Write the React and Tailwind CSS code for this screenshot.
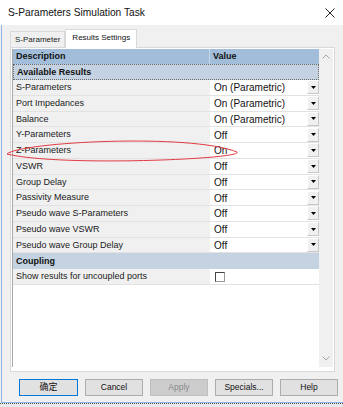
import React from 'react';

const results = [
    ['S-Parameters', 'On (Parametric)'],
    ['Port Impedances', 'On (Parametric)'],
    ['Balance', 'On (Parametric)'],
    ['Y-Parameters', 'Off'],
    ['Z-Parameters', 'On'],
    ['VSWR', 'Off'],
    ['Group Delay', 'Off'],
    ['Passivity Measure', 'Off'],
    ['Pseudo wave S-Parameters', 'Off'],
    ['Pseudo wave VSWR', 'Off'],
    ['Pseudo wave Group Delay', 'Off'],
];

const DropButton = () => (
    <div className="w-[12px] h-[14px] bg-[#f0f0f0] border-t border-l border-white border-r border-b border-r-[#c8c8c8] border-b-[#c8c8c8] flex items-center justify-center">
        <svg width="5" height="3" viewBox="0 0 5 3"><polygon points="0,0 5,0 2.5,3" fill="#000"/></svg>
    </div>
);

const ResultRow = ({label, value}) => (
    <div className="flex h-[15.75px] border-b border-[#e2e2e2]">
        <div className="w-[197px] bg-[#f0f0f0] pl-[3px] pt-px flex items-center text-[9px] text-[#1a1a1a] truncate">{label}</div>
        <div className="flex-1 bg-white flex items-center justify-between pl-[4px]">
            <span className="text-[10px] text-[#111] pt-px">{value}</span>
            <DropButton/>
        </div>
    </div>
);

const Category = ({label, focused}) => (
    <div className={`h-[16px] bg-[#c4d2e1] pl-[3px] pt-px flex items-center text-[9px] font-bold text-[#111] ${focused ? 'border border-dotted border-[#6b6b6b] pl-[2px]' : ''}`}>
        {label}
    </div>
);

export default function App() {
    return (
        <div className="w-[343px] h-[407px] bg-[#f0f0f0] relative overflow-hidden text-black font-['Liberation_Sans','Noto_Sans_CJK_SC',Arial,sans-serif]">

            {/* Title bar */}
            <div className="h-[25px] bg-white flex items-center justify-between pl-[8px] pr-[8px]">
                <span className="text-[10.2px] text-[#111]">S-Parameters Simulation Task</span>
                <svg width="10" height="10" viewBox="0 0 10 10">
                    <path d="M0.5 0.5 L9.5 9.5 M9.5 0.5 L0.5 9.5" stroke="#222" strokeWidth="1"/>
                </svg>
            </div>

            {/* Body */}
            <div className="ml-[1px] h-[378px] border-l border-b border-[#8db6e4]">

                {/* Tabs */}
                <div className="flex items-end pl-[8px] pt-[4px] relative z-10 -mb-px">
                    <div className="h-[16px] mb-px px-[4px] border border-b-0 border-[#d9d9d9] bg-[#f0f0f0] flex items-center pt-px text-[8px] text-[#222]">
                        S-Parameter
                    </div>
                    <div className="h-[19px] px-[6px] border border-b-0 border-[#d9d9d9] bg-white flex items-center pb-[2px] text-[8px] text-[#111]">
                        Results Settings
                    </div>
                </div>

                {/* Tab panel */}
                <div className="ml-[8px] w-[325px] h-[325px] bg-white border border-[#d9d9d9] pl-[1px] pt-[1px]">
                    <div className="flex h-[318px] w-[321px]">
                        <div className="w-[307px] border-l border-[#a8a8a8] flex flex-col">
                            <div className="flex h-[15px] bg-[#a2bdda] text-[9px] font-bold text-[#111]">
                                <div className="w-[197px] pl-[3px] pt-px flex items-center border-r border-[#c9d8e8]">Description</div>
                                <div className="flex-1 pl-[3px] pt-px flex items-center">Value</div>
                            </div>
                            <Category label="Available Results" focused/>
                            {results.map(([label, value]) => (
                                <ResultRow key={label} label={label} value={value}/>
                            ))}
                            <Category label="Coupling"/>
                            <div className="flex h-[15.75px] border-b border-[#e2e2e2]">
                                <div className="w-[197px] bg-[#f0f0f0] pl-[3px] pt-px flex items-center text-[9px] text-[#1a1a1a]">Show results for uncoupled ports</div>
                                <div className="flex-1 bg-white flex items-center pl-[5px]">
                                    <div className="w-[10px] h-[10px] bg-white border border-[#444] border-r-[#999] border-b-[#999]"/>
                                </div>
                            </div>
                        </div>

                        {/* Scrollbar */}
                        <div className="w-[14px] bg-[#f0f0f0] flex flex-col items-center justify-between pt-[5px] pb-[6px]">
                            <svg width="8" height="5" viewBox="0 0 8 5"><path d="M0.5 4.5 L4 1 L7.5 4.5" stroke="#a6a6a6" fill="none"/></svg>
                            <svg width="8" height="5" viewBox="0 0 8 5"><path d="M0.5 0.5 L4 4 L7.5 0.5" stroke="#a6a6a6" fill="none"/></svg>
                        </div>
                    </div>
                </div>

                {/* Buttons */}
                <div className="flex pl-[17px] gap-[7px] mt-[7px] text-[8.5px]">
                    <button className="w-[59px] h-[17px] bg-[#e1e1e1] border border-[#0078d7] text-[9px] text-[#111]">确定</button>
                    <button className="w-[58px] h-[17px] bg-[#e1e1e1] border border-[#adadad] text-[#111]">Cancel</button>
                    <button className="w-[58px] h-[17px] bg-[#cccccc] border border-[#bfbfbf] text-[#8a8a8a]">Apply</button>
                    <button className="w-[58px] h-[17px] bg-[#e1e1e1] border border-[#adadad] text-[#111]">Specials...</button>
                    <button className="w-[58px] h-[17px] bg-[#e1e1e1] border border-[#adadad] text-[#111]">Help</button>
                </div>
            </div>
            <div className="border-t border-dotted border-[#555] h-[4px] bg-[#e9e9e9]"/>

            {/* Red annotation */}
            <svg className="absolute left-0 top-0 pointer-events-none" width="343" height="407">
                <path d="M7 154 C20 142, 190 133, 237 152 C245 159, 60 167, 7 154 Z" fill="none" stroke="#e23b42" strokeWidth="1"/>
            </svg>
        </div>
    );
}
